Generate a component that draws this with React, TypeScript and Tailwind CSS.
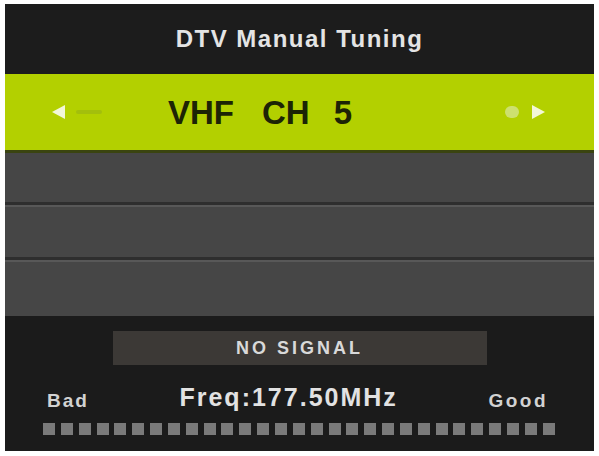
const font = { fontFamily: '"Liberation Sans", Arial, sans-serif' }

export default function App() {
  const squares = Array.from({ length: 29 })

  return (
    <div className="w-[599px] h-[456px] bg-white pl-[5px] pr-[5px] pt-[4px] pb-[5px]" style={font}>
      <div className="w-full h-full bg-[#1b1b1b] flex flex-col overflow-hidden">
        {/* Header */}
        <div className="h-[70px] flex items-center justify-center bg-[#1c1c1c]">
          <span className="text-[24px] font-bold tracking-[1.5px] text-[#e4e4e4] leading-none">DTV Manual Tuning</span>
        </div>

        {/* Channel bar */}
        <div className="h-[76px] bg-[#b3d000] flex items-center relative">
          <div className="absolute left-[46px] top-[30px] flex items-center">
            <svg width="15" height="16" viewBox="0 0 15 16" className="blur-[0.6px]">
              <path d="M1 8 L14 1 L14 15 Z" fill="#f3f7d8" />
            </svg>
            <div className="ml-[10px] w-[26px] h-[4px] rounded-full bg-[#a3bf0c] blur-[0.6px]" />
          </div>
          <div className="pl-[163px] flex items-center gap-[28px] text-[33px] font-bold text-[#1c2405] leading-none">
            <span>VHF</span>
            <div className="flex items-center gap-[24px]">
              <span>CH</span>
              <span>5</span>
            </div>
          </div>
          <div className="absolute left-[500px] top-[30px] flex items-center gap-[12px]">
            <div className="w-[14px] h-[12px] rounded-full bg-[#cde06f] blur-[0.6px]" />
            <svg width="15" height="16" viewBox="0 0 15 16" className="blur-[0.6px]">
              <path d="M14 8 L1 1 L1 15 Z" fill="#f3f7d8" />
            </svg>
          </div>
        </div>
        <div className="h-[3px] bg-[#3a4410]" />

        {/* Empty rows */}
        <div className="flex flex-col bg-[#464646]">
          <div className="h-[52px] border-b-[3px] border-[#2e2e2e]" />
          <div className="h-[55px] border-t-[2px] border-[#585858] border-b-[3px] border-b-[#2e2e2e]" />
          <div className="h-[56px] border-t-[2px] border-[#585858]" />
        </div>

        {/* Signal panel */}
        <div className="flex-1 bg-[#1b1b1b] flex flex-col items-center pt-[15px]">
          <div className="w-[374px] h-[34px] bg-[#3c3936] flex items-center justify-center">
            <span className="text-[18px] font-bold tracking-[3px] text-[#d9d9d9] leading-none">NO SIGNAL</span>
          </div>
          <div className="w-full flex items-end justify-between pl-[42px] pr-[46px] mt-[20px]">
            <span className="text-[19px] font-bold tracking-[2px] text-[#d2d2d2] leading-none">Bad</span>
            <span className="text-[25px] font-bold tracking-[2px] text-[#e2e2e2] leading-none">Freq:177.50MHz</span>
            <span className="text-[19px] font-bold tracking-[2.5px] text-[#d2d2d2] leading-none">Good</span>
          </div>
          <div className="w-full flex justify-between pl-[38px] pr-[39px] mt-[13px]">
            {squares.map((_, i) => (
              <div key={i} className="w-[12px] h-[12px] bg-[#7a7a7a]" />
            ))}
          </div>
        </div>
      </div>
    </div>
  )
}
